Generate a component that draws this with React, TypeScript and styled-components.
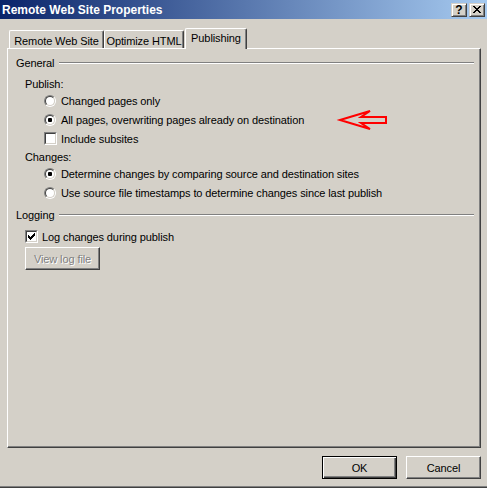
import React from "react";
import styled, { createGlobalStyle, css } from "styled-components";

const GlobalStyle = createGlobalStyle`
  html, body { margin: 0; padding: 0; background: #d4d0c8; }
  body {
    font-family: "Liberation Sans", Arial, sans-serif;
    font-size: 11px;
    letter-spacing: -0.1px;
    color: #000;
  }
`;

const Window = styled.div`
  position: relative;
  width: 487px;
  height: 488px;
  box-sizing: border-box;
  display: flex;
  flex-direction: column;
  background: #d4d0c8;
  border-bottom: 1px solid #404040;
  box-shadow: inset 0 -1px #808080;
  overflow: hidden;
`;

const TitleBar = styled.div`
  height: 19px;
  flex: none;
  display: flex;
  align-items: center;
  justify-content: space-between;
  padding: 0 2px 0 2px;
  background: linear-gradient(to right, #0a246a, #a6caf0);
`;

const TitleText = styled.span`
  color: #fff;
  font-weight: bold;
  font-size: 12px;
  letter-spacing: 0;
  line-height: 1;
  padding-top: 1px;
`;

const CaptionButtons = styled.div`
  display: flex;
  gap: 2px;
`;

const CaptionButton = styled.div`
  width: 16px;
  height: 14px;
  box-sizing: border-box;
  display: flex;
  align-items: center;
  justify-content: center;
  background: #d4d0c8;
  border: 1px solid;
  border-color: #d4d0c8 #404040 #404040 #d4d0c8;
  box-shadow: inset 1px 1px #fff, inset -1px -1px #808080;
  font-weight: bold;
  font-size: 12px;
  letter-spacing: 0;
  line-height: 1;
`;

const Body = styled.div`
  display: flex;
  flex-direction: column;
  padding: 0 6px 0 7px;
`;

const TabStrip = styled.div`
  position: relative;
  z-index: 1;
  height: 30px;
  display: flex;
  align-items: flex-end;
  padding-left: 2px;
`;

const Tab = styled.div<{ $w: number; $active?: boolean }>`
  width: ${(p) => p.$w}px;
  height: 18px;
  box-sizing: border-box;
  margin-bottom: 1px;
  display: flex;
  align-items: center;
  justify-content: center;
  padding-top: 2px;
  background: #d4d0c8;
  border-left: 1px solid #fff;
  border-top: 1px solid #fff;
  border-right: 1px solid #404040;
  border-radius: 2px 2px 0 0;
  box-shadow: inset -1px 0 #808080;
  ${(p) =>
    p.$active &&
    css`
      height: 21px;
      margin-bottom: 0;
      margin-left: 1px;
      padding-top: 0;
      padding-bottom: 2px;
    `}
`;

const Panel = styled.div`
  position: relative;
  height: 400px;
  margin-top: -1px;
  box-sizing: border-box;
  display: flex;
  flex-direction: column;
  padding: 0 6px 0 8px;
  border-left: 1px solid #fff;
  border-top: 1px solid #fff;
  border-right: 1px solid #404040;
  border-bottom: 1px solid #404040;
  box-shadow: inset -1px -1px #808080;
`;

const GroupHeader = styled.div<{ $mt: number }>`
  height: 14px;
  margin-top: ${(p) => p.$mt}px;
  display: flex;
  align-items: center;
  gap: 5px;
`;

const HeaderLine = styled.div`
  flex: 1;
  height: 0;
  border-top: 1px solid #808080;
  border-bottom: 1px solid #fff;
`;

const SubLabel = styled.div<{ $mt: number }>`
  height: 14px;
  margin-top: ${(p) => p.$mt}px;
  margin-left: 9px;
  display: flex;
  align-items: center;
`;

const OptionRow = styled.div<{ $indent: number; $mt?: number }>`
  height: 19px;
  margin-top: ${(p) => p.$mt ?? 0}px;
  padding-left: ${(p) => p.$indent}px;
  display: flex;
  align-items: center;
  gap: 4px;
`;

const Slot = styled.div`
  width: 13px;
  height: 13px;
  display: flex;
  align-items: center;
`;

const RadioOuter = styled.div`
  width: 12px;
  height: 12px;
  box-sizing: border-box;
  border-radius: 50%;
  border: 1px solid;
  border-color: #808080 #fff #fff #808080;
`;

const RadioInner = styled.div`
  width: 10px;
  height: 10px;
  box-sizing: border-box;
  border-radius: 50%;
  border: 1px solid;
  border-color: #404040 #d4d0c8 #d4d0c8 #404040;
  background: #fff;
  display: flex;
  align-items: center;
  justify-content: center;
`;

const RadioDot = styled.div`
  width: 4px;
  height: 4px;
  border-radius: 1px;
  background: #000;
`;

const CheckOuter = styled.div`
  width: 13px;
  height: 13px;
  box-sizing: border-box;
  border: 1px solid;
  border-color: #808080 #fff #fff #808080;
`;

const CheckInner = styled.div`
  width: 11px;
  height: 11px;
  box-sizing: border-box;
  border: 1px solid;
  border-color: #404040 #d4d0c8 #d4d0c8 #404040;
  background: #fff;
  display: flex;
  align-items: center;
  justify-content: center;
`;

const Button = styled.button<{ $default?: boolean; $ml?: number; $mt?: number }>`
  width: 75px;
  height: 23px;
  box-sizing: border-box;
  margin: ${(p) => p.$mt ?? 0}px 0 0 ${(p) => p.$ml ?? 0}px;
  padding: 0;
  align-self: flex-start;
  font: inherit;
  letter-spacing: inherit;
  color: #000;
  background: #d4d0c8;
  border: 1px solid;
  border-color: #fff #404040 #404040 #fff;
  box-shadow: inset -1px -1px #808080, inset 1px 1px #d4d0c8;
  ${(p) =>
    p.$default &&
    css`
      border-color: #000;
      box-shadow: inset 1px 1px #fff, inset -1px -1px #404040, inset -2px -2px #808080;
    `}
  &:disabled {
    color: #808080;
    text-shadow: 1px 1px 0 #fff;
  }
`;

const Footer = styled.div`
  display: flex;
  justify-content: flex-end;
  gap: 9px;
  padding-top: 8px;
`;

const ArrowMark = styled.svg`
  position: absolute;
  left: 328px;
  top: 57px;
`;

const Radio = ({ checked }: { checked?: boolean }) => (
  <Slot>
    <RadioOuter>
      <RadioInner>{checked && <RadioDot />}</RadioInner>
    </RadioOuter>
  </Slot>
);

const checkRows: [number, number, number][] = [
  [6, 0, 1],
  [5, 1, 2],
  [0, 2, 1],
  [4, 2, 3],
  [0, 3, 2],
  [3, 3, 3],
  [0, 4, 5],
  [1, 5, 3],
  [2, 6, 1],
];

const xRows: [number, number, number][] = [
  [0, 0, 2], [6, 0, 2],
  [1, 1, 2], [5, 1, 2],
  [2, 2, 4],
  [3, 3, 2],
  [2, 4, 4],
  [1, 5, 2], [5, 5, 2],
  [0, 6, 2], [6, 6, 2],
];

const pixelPath = (rows: [number, number, number][]) =>
  rows.map(([x, y, w]) => `M${x} ${y}h${w}v1h-${w}z`).join("");

const Check = ({ checked }: { checked?: boolean }) => (
  <Slot>
    <CheckOuter>
      <CheckInner>
        {checked && (
          <svg width="7" height="7" viewBox="0 0 7 7" shapeRendering="crispEdges">
            <path d={pixelPath(checkRows)} fill="#000" />
          </svg>
        )}
      </CheckInner>
    </CheckOuter>
  </Slot>
);

export default function App() {
  return (
    <>
      <GlobalStyle />
      <Window>
        <TitleBar>
          <TitleText>Remote Web Site Properties</TitleText>
          <CaptionButtons>
            <CaptionButton>?</CaptionButton>
            <CaptionButton>
              <svg width="8" height="7" viewBox="0 0 8 7" shapeRendering="crispEdges">
                <path d={pixelPath(xRows)} fill="#000" />
              </svg>
            </CaptionButton>
          </CaptionButtons>
        </TitleBar>
        <Body>
          <TabStrip>
            <Tab $w={95}>Remote Web Site</Tab>
            <Tab $w={80}>Optimize HTML</Tab>
            <Tab $w={62} $active>
              Publishing
            </Tab>
          </TabStrip>
          <Panel>
            <GroupHeader $mt={7}>
              <span>General</span>
              <HeaderLine />
            </GroupHeader>
            <SubLabel $mt={7}>Publish:</SubLabel>
            <OptionRow $indent={28}>
              <Radio />
              <span>Changed pages only</span>
            </OptionRow>
            <OptionRow $indent={28}>
              <Radio checked />
              <span>All pages, overwriting pages already on destination</span>
            </OptionRow>
            <OptionRow $indent={28}>
              <Check />
              <span>Include subsites</span>
            </OptionRow>
            <SubLabel $mt={2}>Changes:</SubLabel>
            <OptionRow $indent={28}>
              <Radio checked />
              <span>Determine changes by comparing source and destination sites</span>
            </OptionRow>
            <OptionRow $indent={28}>
              <Radio />
              <span>Use source file timestamps to determine changes since last publish</span>
            </OptionRow>
            <GroupHeader $mt={6}>
              <span>Logging</span>
              <HeaderLine />
            </GroupHeader>
            <OptionRow $indent={9} $mt={5}>
              <Check checked />
              <span>Log changes during publish</span>
            </OptionRow>
            <Button $ml={9} $mt={1} disabled>
              View log file
            </Button>
            <ArrowMark width="54" height="28" viewBox="0 0 54 28">
              <polygon
                points="4,14 34,5 25,11 50,11 50,17 25,17 34,23"
                fill="none"
                stroke="#ff0000"
                strokeWidth="2"
                strokeLinejoin="miter"
              />
            </ArrowMark>
          </Panel>
          <Footer>
            <Button $default>OK</Button>
            <Button>Cancel</Button>
          </Footer>
        </Body>
      </Window>
    </>
  );
}
